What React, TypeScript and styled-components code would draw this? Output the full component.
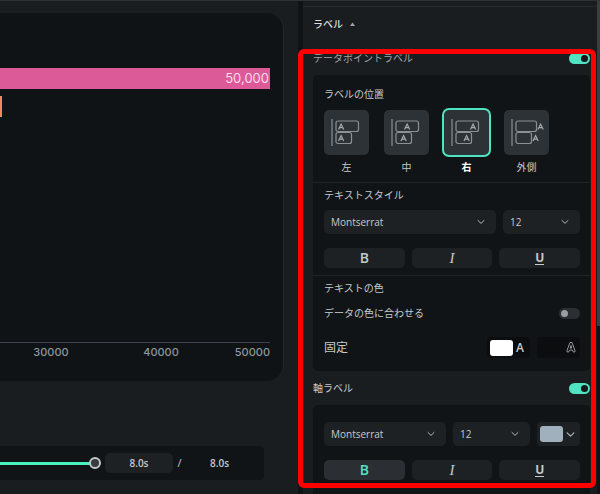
import React, { useState } from "react";
import styled, { createGlobalStyle, css } from "styled-components";

const color = {
  page: "#1a1d1f",
  well: "#101416",
  field: "#1d2123",
  tile: "#2d3236",
  line: "#1f2326",
  edge: "#2e3235",
  text: "#c6c9cb",
  muted: "#9fa3a6",
  accent: "#4fe3c1",
};

const GlobalStyle = createGlobalStyle`
  *, *::before, *::after { box-sizing: border-box; }
  body { margin: 0; background: ${color.page}; }
  body, button, select, input, output {
    font-family: "Open Sans", "Noto Sans CJK JP", sans-serif;
    font-size: 10px;
    line-height: 16px;
    color: ${color.text};
  }
`;

const Page = styled.div`
  display: grid;
  grid-template-columns: minmax(0, 1fr) 302px;
  height: 100vh;
  overflow: hidden;
  border-top: 1px solid ${color.edge};
`;

/* ---------- Preview ---------- */

const Preview = styled.main`
  display: flex;
  flex-direction: column;
  padding: 12px 14px 14px 0;
`;

const ChartCard = styled.section`
  flex: 1;
  display: flex;
  flex-direction: column;
  gap: 7px;
  margin-bottom: 65px;
  padding: 55px 13px 21px 0;
  background: #0f1315;
  border-right: 1px solid #23272a;
  border-radius: 0 16px 16px 0;
`;

const Bar = styled.div<{ $fill: string; $short?: boolean }>`
  height: 21px;
  width: ${(p) => (p.$short ? "2px" : "100%")};
  padding-right: ${(p) => (p.$short ? "0" : "1px")};
  background: ${(p) => p.$fill};
  color: #f8dce9;
  font: 13px/21px Inter, sans-serif;
  text-align: right;
`;

const Axis = styled.div`
  display: flex;
  justify-content: flex-end;
  margin-top: auto;
  padding-top: 1px;
  border-top: 1px solid #3e4350;
  color: #8d98a1;
  font: 500 11px/16px Inter, sans-serif;
`;

const Tick = styled.span<{ $last?: boolean }>`
  flex: none;
  width: ${(p) => (p.$last ? "54px" : "110px")};
  text-align: ${(p) => (p.$last ? "right" : "center")};
`;

const Player = styled.section`
  display: flex;
  align-items: center;
  height: 34px;
  margin-right: 20px;
  padding-right: 35px;
  background: ${color.well};
  border-radius: 0 4px 4px 0;
`;

const Seek = styled.input`
  flex: 1;
  min-width: 0;
  height: 13px;
  margin: 0 4px 0 0;
  appearance: none;
  background: linear-gradient(#46f0bf, #46f0bf) left center / calc(100% - 6px) 3px no-repeat;

  &::-webkit-slider-thumb {
    appearance: none;
    width: 12px;
    height: 12px;
    border: 2px solid #c3c6c9;
    border-radius: 50%;
    background: #363b40;
  }
`;

const TimeField = styled.input`
  width: 68px;
  height: 20px;
  padding: 0;
  border: 0;
  border-radius: 5px;
  background: ${color.field};
  font-weight: 600;
  text-align: center;
`;

const Slash = styled.span`
  width: 13px;
  font-size: 11px;
  text-align: center;
`;

const Total = styled.output`
  padding-left: 24px;
  font-weight: 600;
`;

/* ---------- Settings panel ---------- */

const Side = styled.aside`
  position: relative;
  display: flex;
  min-height: 0;
  border-left: 5px solid #101315;
`;

const Panel = styled.div`
  flex: 1;
  display: flex;
  flex-direction: column;
  padding-top: 5px;
`;

const Scrollbar = styled.div`
  width: 3px;
  background: #101315;

  &::before {
    content: "";
    display: block;
    height: 66%;
    background: #3a3e41;
  }
`;

const Highlight = styled.div`
  position: absolute;
  inset: 48px 4px 6px -5px;
  border: 5px solid #ff0000;
  border-radius: 6px;
  pointer-events: none;
`;

const Disclosure = styled.button`
  display: flex;
  align-items: center;
  gap: 7px;
  flex: none;
  height: 35px;
  padding: 0 10px;
  border: 0;
  border-top: 1px solid #282c2e;
  background: none;
  color: #dcdedf;
  font-weight: 500;
`;

const SectionHead = styled.label<{ $dim?: boolean }>`
  display: flex;
  align-items: center;
  justify-content: space-between;
  flex: none;
  height: 34px;
  margin: 0 7px 0 10px;
  color: ${(p) => (p.$dim ? color.muted : color.text)};
`;

const Group = styled.section<{ $open?: boolean }>`
  display: flex;
  flex-direction: column;
  flex: ${(p) => (p.$open ? "1" : "none")};
  margin: 0 7px 0 10px;
  background: ${color.well};
  border-radius: ${(p) => (p.$open ? "5px 5px 0 0" : "5px")};
`;

const Block = styled.div<{ $top: number; $bottom: number }>`
  padding: ${(p) => p.$top}px 10px ${(p) => p.$bottom}px 11px;

  & + & {
    border-top: 1px solid ${color.line};
  }
`;

const Title = styled.div`
  margin-bottom: 7px;
`;

const Tiles = styled.div`
  display: flex;
  gap: 15px;
  margin-top: 8px;
`;

const Option = styled.label<{ $on: boolean }>`
  width: 45px;
  text-align: center;
  color: ${(p) => (p.$on ? "#ffffff" : color.text)};
  font-weight: ${(p) => (p.$on ? 700 : 400)};
`;

const HiddenRadio = styled.input`
  position: absolute;
  opacity: 0;
  margin: 0;
`;

const Tile = styled.span<{ $on: boolean }>`
  display: grid;
  place-items: center;
  height: 45px;
  margin-bottom: 4px;
  border-radius: 5px;
  background: ${color.tile};
  box-shadow: ${(p) => (p.$on ? `0 0 0 2px ${color.accent}` : "none")};

  & > svg {
    overflow: visible;
  }
`;

const Row = styled.div<{ $spaced?: boolean }>`
  display: flex;
  gap: 7px;
  margin-top: ${(p) => (p.$spaced ? "14px" : "0")};
`;

const SelectBox = styled.div<{ $narrow?: boolean }>`
  display: grid;
  flex: ${(p) => (p.$narrow ? "0 0 77px" : "1")};
  align-items: center;

  & > * {
    grid-area: 1 / 1;
  }
  & > svg {
    justify-self: end;
    margin-right: 11px;
    pointer-events: none;
  }
`;

const Select = styled.select`
  width: 100%;
  height: 24px;
  padding: 0 24px 0 7px;
  appearance: none;
  border: 0;
  border-radius: 5px;
  background: ${color.field};
`;

const StyleButton = styled.button<{ $on?: boolean }>`
  display: grid;
  place-items: center;
  flex: 1;
  height: 20px;
  padding: 0;
  border: 0;
  border-radius: 5px;
  background: ${(p) => (p.$on ? "#2b2f33" : color.field)};
  color: ${(p) => (p.$on ? color.accent : color.text)};
`;

const Glyph = styled.span<{ $kind: "b" | "i" | "u" }>`
  ${(p) => p.$kind === "b" && css`font: 600 14px/20px "Open Sans", sans-serif;`}
  ${(p) => p.$kind === "i" && css`font: italic 15px/20px "Liberation Serif", serif;`}
  ${(p) =>
    p.$kind === "u" &&
    css`
      border-bottom: 1px solid currentColor;
      font: 700 12px/12px "Open Sans", sans-serif;
    `}
`;

const Toggle = styled.input`
  display: flex;
  align-items: center;
  flex: none;
  width: 21px;
  height: 11px;
  margin: 0;
  padding: 0 2px;
  appearance: none;
  border-radius: 6px;
  background: #2b2f31;

  &::before {
    content: "";
    width: 7px;
    height: 7px;
    border-radius: 50%;
    background: #9a9ea4;
  }
  &:checked {
    justify-content: flex-end;
    background: ${color.accent};
  }
  &:checked::before {
    background: #15191b;
  }
`;

const ColorRow = styled.div<{ $tall?: boolean }>`
  display: flex;
  align-items: center;
  gap: 7px;
  height: ${(p) => (p.$tall ? "21px" : "16px")};
  margin-top: ${(p) => (p.$tall ? "16px" : "9px")};
`;

const Grow = styled.label<{ $large?: boolean }>`
  flex: 1;
  font-size: ${(p) => (p.$large ? "12px" : "10px")};
`;

const ColorButton = styled.button<{ $field?: boolean }>`
  display: flex;
  align-items: center;
  flex: none;
  gap: 3px;
  width: 43px;
  height: ${(p) => (p.$field ? "24px" : "21px")};
  padding: 0 4px 0 3px;
  border: 0;
  border-radius: 4px;
  background: ${(p) => (p.$field ? color.field : "#0b0d0e")};
`;

const Swatch = styled.span<{ $fill: string }>`
  flex: none;
  width: 23px;
  height: 16px;
  border-radius: 3px;
  background: ${(p) => p.$fill};
`;

const Letter = styled.span`
  font: 600 12px/16px "Open Sans", sans-serif;
`;

/* ---------- Icons ---------- */

const Chevron = ({ size = 8 }: { size?: number }) => (
  <svg width={size} height={size} viewBox="0 0 8 8" fill="none" stroke="#b4b8bb" strokeLinecap="round" strokeLinejoin="round" aria-hidden>
    <path d="M1 2.5 4 5.4 7 2.5" />
  </svg>
);

const Caret = () => (
  <svg width="5" height="4" viewBox="0 0 5 4" aria-hidden>
    <path d="M0 4 2.5 0.5 5 4Z" fill="#a0a4a6" />
  </svg>
);

const OutlinedA = () => (
  <svg width="11" height="13" viewBox="0 0 11 13" fill="none" stroke="#a5a8aa" strokeLinejoin="round" aria-hidden>
    <path d="M4.4 1h2.2L10 10.2Q9.9 12 8.2 11.6L7 9.3H4L2.8 11.6Q1.1 12 1 10.2Z" />
    <path d="M4.7 7.1h1.6L5.5 4.3Z" />
  </svg>
);

type Placement = { id: string; letters: [number, number]; outside?: boolean };

const PlacementIcon = ({ letters, outside }: Omit<Placement, "id">) => (
  <svg width="33" height="27" viewBox="0 0 33 27" fill="none" stroke="#8b9094" strokeWidth="1.2" aria-hidden>
    <path d="M2 0v27" />
    <rect x="6" y="2" width={outside ? 20.5 : 22.5} height="10.5" rx="2" />
    <rect x="6" y="13.5" width="15.5" height="11" rx="2" />
    {letters.map((x, i) => (
      <path key={i} d={`M${x} ${i ? 22 : 10.5}l2.6-5.4 2.6 5.4m-4.3-1.8h3.4`} stroke="#a6aaad" />
    ))}
  </svg>
);

/* ---------- Composed controls ---------- */

const placements: Placement[] = [
  { id: "左", letters: [8.5, 8.5] },
  { id: "中", letters: [14.5, 11] },
  { id: "右", letters: [20.5, 14] },
  { id: "外側", letters: [28, 23], outside: true },
];

function FontSelects({ children }: { children?: React.ReactNode }) {
  return (
    <Row>
      <SelectBox>
        <Select aria-label="フォント">
          <option>Montserrat</option>
        </Select>
        <Chevron />
      </SelectBox>
      <SelectBox $narrow>
        <Select aria-label="サイズ">
          <option>12</option>
        </Select>
        <Chevron />
      </SelectBox>
      {children}
    </Row>
  );
}

function StyleButtons({ initialBold = false }: { initialBold?: boolean }) {
  const [on, setOn] = useState({ b: initialBold, i: false, u: false });
  return (
    <Row $spaced>
      {(["b", "i", "u"] as const).map((kind) => (
        <StyleButton
          key={kind}
          type="button"
          aria-pressed={on[kind]}
          $on={on[kind]}
          onClick={() => setOn({ ...on, [kind]: !on[kind] })}
        >
          <Glyph $kind={kind}>{kind.toUpperCase()}</Glyph>
        </StyleButton>
      ))}
    </Row>
  );
}

export default function App() {
  const [placement, setPlacement] = useState("右");

  return (
    <>
      <GlobalStyle />
      <Page lang="ja">
        <Preview>
          <ChartCard>
            <Bar $fill="#dd5a98">50,000</Bar>
            <Bar $fill="#f08a5d" $short />
            <Axis>
              <Tick>30000</Tick>
              <Tick>40000</Tick>
              <Tick $last>50000</Tick>
            </Axis>
          </ChartCard>
          <Player>
            <Seek type="range" min={0} max={8} step={0.1} defaultValue={8} aria-label="再生位置" />
            <TimeField defaultValue="8.0s" aria-label="現在の時間" />
            <Slash>/</Slash>
            <Total>8.0s</Total>
          </Player>
        </Preview>

        <Side>
          <Panel>
            <Disclosure type="button" aria-expanded>
              ラベル
              <Caret />
            </Disclosure>

            <SectionHead $dim>
              データポイントラベル
              <Toggle type="checkbox" role="switch" defaultChecked />
            </SectionHead>
            <Group>
              <Block $top={11} $bottom={7}>
                <Title>ラベルの位置</Title>
                <Tiles role="radiogroup" aria-label="ラベルの位置">
                  {placements.map(({ id, ...icon }) => (
                    <Option key={id} $on={placement === id}>
                      <HiddenRadio
                        type="radio"
                        name="placement"
                        checked={placement === id}
                        onChange={() => setPlacement(id)}
                      />
                      <Tile $on={placement === id}>
                        <PlacementIcon {...icon} />
                      </Tile>
                      {id}
                    </Option>
                  ))}
                </Tiles>
              </Block>
              <Block $top={4} $bottom={7}>
                <Title>テキストスタイル</Title>
                <FontSelects />
                <StyleButtons />
              </Block>
              <Block $top={4} $bottom={13}>
                <Title>テキストの色</Title>
                <ColorRow>
                  <Grow htmlFor="match-color">データの色に合わせる</Grow>
                  <Toggle id="match-color" type="checkbox" role="switch" />
                </ColorRow>
                <ColorRow $tall>
                  <Grow as="span" $large>固定</Grow>
                  <ColorButton type="button" aria-label="文字の色">
                    <Swatch $fill="#ffffff" />
                    <Letter>A</Letter>
                  </ColorButton>
                  <ColorButton type="button" aria-label="縁取りの色">
                    <Swatch $fill="transparent" />
                    <OutlinedA />
                  </ColorButton>
                </ColorRow>
              </Block>
            </Group>

            <SectionHead>
              軸ラベル
              <Toggle type="checkbox" role="switch" defaultChecked />
            </SectionHead>
            <Group $open>
              <Block $top={17} $bottom={0}>
                <FontSelects>
                  <ColorButton type="button" $field aria-label="軸ラベルの色">
                    <Swatch $fill="#a0b0bc" />
                    <Chevron size={9} />
                  </ColorButton>
                </FontSelects>
                <StyleButtons initialBold />
              </Block>
            </Group>
          </Panel>
          <Scrollbar />
          <Highlight />
        </Side>
      </Page>
    </>
  );
}
